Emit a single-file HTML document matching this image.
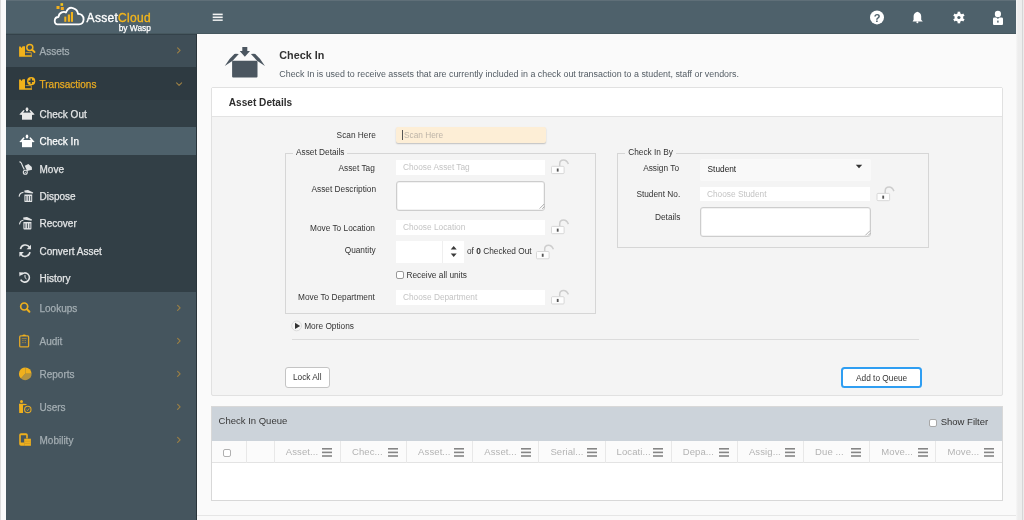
<!DOCTYPE html>
<html><head><meta charset="utf-8">
<style>
*{margin:0;padding:0;box-sizing:border-box}
html,body{width:1024px;height:520px;overflow:hidden;background:#fafafa;font-family:"Liberation Sans",sans-serif}
body{will-change:transform}
.a{position:absolute}
svg{position:absolute;overflow:visible}
#lb{left:0;top:0;width:6px;height:520px;background:#fafafa;border-left:1.5px solid #dcdcdc}
#rb{left:1016px;top:0;width:8px;height:520px;background:linear-gradient(to right,#f7f7f7,#ededed 2px);border-right:2px solid #ececec}
#rb:after{content:"";position:absolute;left:6px;top:0;width:1px;height:520px;background:#d6d6d6}
#hdr{left:6px;top:0;width:1010px;height:34px;background:#4e616b;border-top:1px solid #5f6f78;border-bottom:1px solid #46585f}
#side{left:6px;top:34px;width:190px;height:486px;background:#45555e}
.row{position:absolute;left:0;width:190px}
.lbl{position:absolute;left:33.5px;font-size:10px;white-space:nowrap;line-height:12px;-webkit-text-stroke:0.25px currentColor}
#main{left:196px;top:34px;width:820px;height:486px;background:#fafafa;border-left:1px solid #2a353b}
.t{position:absolute;white-space:nowrap;line-height:1}
.chev{position:absolute;left:171px;width:5px;height:5px;border-right:1px solid #8c7a52;border-top:1px solid #8c7a52;transform:rotate(45deg)}
.inp{position:absolute;background:#fff;font-size:8.3px;color:#c4c4c4;padding-left:7px;white-space:nowrap}
.ta{position:absolute;background:#fff;border:1px solid #cdcdcd;border-radius:3px;box-shadow:inset 0 0 0 0.5px #e6e6e6}
.fl{position:absolute;font-size:8.3px;color:#333;white-space:nowrap;line-height:1}
.fs{position:absolute;border:1px solid #d6d6d6}
.lg{position:absolute;font-size:8.3px;color:#333;background:#f4f4f4;padding:0 3px;white-space:nowrap;line-height:10px}
.col{position:absolute;top:441px;height:22px;border-left:1px solid #e8e8e8;font-size:9.5px;color:#b3b3b3;line-height:22px;white-space:nowrap;width:66.16px;padding-left:11px;letter-spacing:0.1px}
.col i{position:absolute;right:7.8px;top:7px;width:10px;height:8.8px;border-top:1.6px solid #858585;border-bottom:1.6px solid #858585}
.col i:after{content:"";position:absolute;left:0;top:2px;width:10px;height:1.6px;background:#858585}
.btn{position:absolute;background:#fff;border:1px solid #bdbdbd;border-radius:3px;font-size:8.3px;color:#333;text-align:center}
</style></head><body>
<div class="a" id="lb"></div>
<div class="a" id="rb"></div>
<div class="a" id="hdr"></div>

<!-- logo -->
<svg style="left:0;top:0" width="200" height="34">
  <rect x="56.5" y="6" width="3" height="3" fill="#f2b01e"/>
  <rect x="60.5" y="3.2" width="2.6" height="2.6" fill="#f5c518"/>
  <rect x="60.8" y="7" width="3" height="3" fill="#f2a91e"/>
  <path d="M57.5 24.3 C53.5 24.3 53.8 17 58.5 17 C59 12.5 63.8 10.8 66 12.5 C67.5 8.8 70 7.6 71.8 7.8 L73.5 8.3 C76 9 77.8 11.5 78 14 C81 13.6 83.8 15.8 83.6 19.5 C83.4 22.5 81.5 24.3 79 24.3 Z" fill="none" stroke="#fff" stroke-width="1.8" stroke-linejoin="round"/>
  <rect x="64.3" y="16.6" width="2" height="5.2" fill="#f0b21c"/>
  <rect x="67.8" y="14.5" width="2.2" height="7.3" fill="#f0b21c"/>
  <rect x="70.9" y="12" width="2.1" height="9.8" fill="#f0b21c"/>
  <text x="86.6" y="22" font-family="Liberation Sans" font-size="12" fill="#fff" stroke="#fff" stroke-width="0.35" letter-spacing="0.3">Asset<tspan fill="#f2b51c" stroke="#f2b51c">Cloud</tspan></text>
  <text x="118.7" y="30.6" font-family="Liberation Sans" font-size="8.4" fill="#fff" stroke="#fff" stroke-width="0.25">by Wasp</text>
  <rect x="212.7" y="13.6" width="10" height="1.6" fill="#f4f4f4"/>
  <rect x="212.7" y="16.5" width="10" height="1.6" fill="#f4f4f4"/>
  <rect x="212.7" y="19.4" width="10" height="1.6" fill="#e2e5e6"/>
</svg>

<!-- header icons -->
<svg style="left:860px;top:0" width="160" height="34">
  <circle cx="17" cy="17.4" r="7" fill="#fff"/>
  <text x="17" y="21.5" font-family="Liberation Sans" font-size="11" font-weight="bold" fill="#4e616b" text-anchor="middle">?</text>
  <path d="M52.6 21.4 L62.8 21.4 L61.2 19.8 L61.2 16.2 Q61.2 12.9 57.4 11.8 Q53.6 12.9 53.6 16.2 L53.6 19.8 Z" fill="#fff"/>
  <circle cx="57.4" cy="22.2" r="1" fill="#fff"/>
  <g transform="translate(98.9 17.5)" fill="#fff">
    <circle r="4.3"/>
    <rect x="-1.3" y="-5.8" width="2.6" height="11.6"/>
    <rect x="-1.3" y="-5.8" width="2.6" height="11.6" transform="rotate(60)"/>
    <rect x="-1.3" y="-5.8" width="2.6" height="11.6" transform="rotate(120)"/>
    <circle r="1.6" fill="#4e616b"/>
  </g>
  <ellipse cx="137.9" cy="14" rx="3.1" ry="3.2" fill="#fff"/>
  <path d="M133 18.8 Q133 17.4 134.4 17.4 L136.4 17.4 L137.9 19 L139.4 17.4 L141.6 17.4 Q143 17.4 143 18.8 L143 24 Q143 25 142 25 L134 25 Q133 25 133 24 Z" fill="#fff"/>
  <rect x="137.2" y="20.6" width="1.4" height="2" fill="#4e616b"/>
</svg>

<div class="a" id="side">
  <div class="row" style="top:0;height:33px;background:#3f4e57;border-top:1px solid #34424a"></div>
  <div class="row" style="top:33px;height:33px;background:#2e3a41"></div>
  <div class="row" style="top:66px;height:192px;background:#323f46"></div>
  <div class="row" style="top:93px;height:28px;background:#4e616b"></div>
  
  <svg style="left:0;top:0" width="1" height="1">
    <g fill="none" stroke="#9a7f45" stroke-width="1.15" stroke-linecap="round" stroke-linejoin="round">
      <path d="M171.6 13.8 L174.1 16.3 L171.6 18.8"/>
      <path d="M170.6 48.8 L173.1 51.3 L175.6 48.8"/>
      <path d="M171.6 271.3 L174.1 273.8 L171.6 276.3"/>
      <path d="M171.6 304.3 L174.1 306.8 L171.6 309.3"/>
      <path d="M171.6 337.3 L174.1 339.8 L171.6 342.3"/>
      <path d="M171.6 370.3 L174.1 372.8 L171.6 375.3"/>
      <path d="M171.6 403.3 L174.1 405.8 L171.6 408.3"/>
    </g>
  </svg>
<div class="lbl" style="top:12px;color:#a3adb2">Assets</div>
  <div class="lbl" style="top:45px;color:#e9ab22">Transactions</div>
  <div class="lbl" style="top:75px;color:#e4e6e7">Check Out</div>
  <div class="lbl" style="top:102px;color:#ffffff">Check In</div>
  <div class="lbl" style="top:130px;color:#e4e6e7">Move</div>
  <div class="lbl" style="top:157px;color:#e4e6e7">Dispose</div>
  <div class="lbl" style="top:184px;color:#e4e6e7">Recover</div>
  <div class="lbl" style="top:212px;color:#e4e6e7">Convert Asset</div>
  <div class="lbl" style="top:239px;color:#e4e6e7">History</div>
  <div class="lbl" style="top:269px;color:#a3adb2">Lookups</div>
  <div class="lbl" style="top:302px;color:#a3adb2">Audit</div>
  <div class="lbl" style="top:335px;color:#a3adb2">Reports</div>
  <div class="lbl" style="top:368px;color:#a3adb2">Users</div>
  <div class="lbl" style="top:401px;color:#a3adb2">Mobility</div>
</div>


<!-- sidebar icons -->
<svg style="left:0;top:0" width="1" height="1">
  <g fill="#f2b21b">
    <!-- assets -->
    <path d="M19.1 46.5 L20.6 46.5 L21.6 48 L22.6 46.3 L25 46.3 L25 55.2 L32 55.2 L32 56.8 L19.1 56.8 Z"/>
    <path d="M25.6 52.6 H31.3 V55.6" fill="none" stroke="#c89a30" stroke-width="0.9"/>
    <circle cx="29.8" cy="47.4" r="3" fill="none" stroke="#f2b21b" stroke-width="1.5"/>
    <path d="M32.1 49.7 L34.5 52" stroke="#f2b21b" stroke-width="1.9" stroke-linecap="round"/>
    <!-- transactions -->
    <path d="M19.1 79.5 L20.6 79.5 L21.6 81 L22.6 79.3 L25 79.3 L25 88.2 L32 88.2 L32 89.8 L19.1 89.8 Z"/>
    <path d="M25.6 85.6 H31.3 V88.6" fill="none" stroke="#c89a30" stroke-width="0.9"/>
    <circle cx="31.2" cy="81.2" r="4.1"/>
    <path d="M31.2 78.6 V83.8 M28.6 81.2 H33.8" stroke="#2e3a41" stroke-width="1.5"/>
  </g>
  <g fill="#e8e8e8">
    <!-- check out -->
    <rect x="22" y="112.6" width="10" height="7.1"/>
    <path d="M19.3 114.6 L23.5 109.9 L24.7 110.6 L21.6 114.9 Z M34.7 114.6 L30.5 109.9 L29.3 110.6 L32.4 114.9 Z"/>
    <path d="M27 107 L29 109.6 L28 109.6 L28 111.2 L26 111.2 L26 109.6 L25 109.6 Z"/>
  </g>
  <g fill="#ffffff">
    <!-- check in -->
    <rect x="22" y="140" width="10" height="7.2"/>
    <path d="M19.3 142 L23.5 137.3 L24.7 138 L21.6 142.3 Z M34.7 142 L30.5 137.3 L29.3 138 L32.4 142.3 Z"/>
    <ellipse cx="27" cy="136.6" rx="1.3" ry="2"/>
  </g>
  <g fill="#e2e4e5">
    <!-- move -->
    <path d="M19.4 161.8 Q21.5 162 22.3 165.5 L24.3 169.5" fill="none" stroke="#e2e4e5" stroke-width="1.1"/>
    <path d="M24.8 165.8 L28.4 164 L31.8 167 L32 169.7 L27 171 Z"/>
    <circle cx="25.3" cy="172.3" r="2" fill="none" stroke="#e2e4e5" stroke-width="1.1"/>
    <circle cx="25.3" cy="172.3" r="0.6"/>
    <!-- dispose -->
    <path d="M24.4 194.6 H32.2 V201.2 Q32.2 202.1 31.3 202.1 H25.3 Q24.4 202.1 24.4 201.2 Z"/>
    <path d="M25.9 196 V200.8 M28.3 196 V200.8 M30.7 196 V200.8" stroke="#33414a" stroke-width="0.9"/>
    <path d="M24.3 190.4 L28 189.9 L33.2 192.4 L32.8 193.6 L24.5 192.5 Z"/>
    <path d="M19.1 196.6 Q19.6 192.7 23.5 192.4" fill="none" stroke="#e2e4e5" stroke-width="1.1"/>
    <!-- recover -->
    <path d="M23.4 222 H31.4 V228.6 Q31.4 229.5 30.5 229.5 H24.3 Q23.4 229.5 23.4 228.6 Z"/>
    <path d="M24.9 223.4 V228.2 M27.4 223.4 V228.2 M29.9 223.4 V228.2" stroke="#33414a" stroke-width="0.9"/>
    <path d="M23.2 217.4 L27 217 L32 219.6 L31.6 220.8 L23.4 219.6 Z"/>
    <path d="M19.5 224.4 Q20 220.5 23.4 220.2" fill="none" stroke="#e2e4e5" stroke-width="1.1"/>
    <!-- convert -->
    <path d="M20.5 249.2 A5 5 0 0 1 29.6 247.2" fill="none" stroke="#e2e4e5" stroke-width="1.6"/>
    <path d="M31 244.7 L31 249.3 L26.6 249.3 Z"/>
    <path d="M30 252.2 A5 5 0 0 1 20.9 254.2" fill="none" stroke="#e2e4e5" stroke-width="1.6"/>
    <path d="M19.4 256.7 L19.4 252.1 L23.8 252.1 Z"/>
    <!-- history -->
    <path d="M21.1 274.8 A4.6 4.6 0 1 1 20.7 279.6" fill="none" stroke="#e2e4e5" stroke-width="1.6"/>
    <path d="M19.2 272.3 L23.6 272.6 L19.5 276.6 Z"/>
    <path d="M25 274.9 V277.6 L26.6 279" fill="none" stroke="#e2e4e5" stroke-width="1"/>
  </g>
  <g fill="#efb01d">
    <!-- lookups -->
    <circle cx="24.2" cy="306.5" r="3.5" fill="none" stroke="#efb01d" stroke-width="1.7"/>
    <path d="M26.9 309.2 L29.4 311.7" stroke="#efb01d" stroke-width="2" stroke-linecap="round"/>
    <!-- audit -->
    <rect x="19.7" y="335.9" width="8.9" height="11" rx="1" fill="none" stroke="#e3a927" stroke-width="1.3"/>
    <path d="M22.3 336 Q22.3 334.6 24.15 334.6 Q26 334.6 26 336 Z"/>
    <path d="M21.8 338.6 H26.6 M22.2 340.6 H23.6 M24.6 340.6 H26 M22.2 342.6 H23.6 M24.6 342.6 H26" stroke="#c9962a" stroke-width="0.7"/>
    <!-- reports -->
    <path d="M25.3 373.8 V367.5 A6.3 6.3 0 0 1 31.6 373.8 Z"/>
    <path d="M25.3 373.8 V367.5 A6.3 6.3 0 0 0 21 378.4 Z"/>
    <path d="M25.3 373.8 L31.6 373.8 A6.3 6.3 0 0 1 21 378.4 Z" fill="#c9a03a" opacity="0.85"/>
    <!-- users -->
    <circle cx="21.5" cy="401.6" r="1.5"/>
    <path d="M19 403.8 H23 L26.5 404 V405 L23 405.2 V413 H19.2 Z"/>
    <circle cx="27.8" cy="409.4" r="3.2" fill="none" stroke="#e3a927" stroke-width="1.1"/>
    <path d="M26.6 409.8 L27.6 410.6 L29.2 408.4" fill="none" stroke="#e3a927" stroke-width="0.8"/>
    <!-- mobility -->
    <path d="M21 433.2 H26 Q27.8 433.2 27.8 435 V438.6 H24.2 V445.8 H21 Q19.2 445.8 19.2 444 V435 Q19.2 433.2 21 433.2 Z M20.8 435.2 V442.6 H24.2 V438.6 H26.2 V435.2 Z" fill-rule="evenodd"/>
    <path d="M24.2 438.7 H30.9 V445.8 H24.2 Z"/>
    <path d="M24.8 441.2 H30.3 M24.8 443.4 H30.3" stroke="#b88a2e" stroke-width="0.5"/>
  </g>
</svg>

<div class="a" id="main"></div>

<!-- title area -->
<svg style="left:0;top:0" width="300" height="90">
  <rect x="232.1" y="60.7" width="25.4" height="16.9" rx="1" fill="#4b5660"/>
  <path d="M242.3 46.9 H247.3 V50.9 H250 L244.85 56.8 L239.7 50.9 H242.3 Z" fill="#4b5660"/>
  <path d="M224.75 66 Q228.7 58.7 234.4 53.9 Q236.5 53.7 238.8 54.1 L232.6 60.7 Z" fill="#4b5660"/>
  <path d="M264.95 66 Q261 58.7 255.3 53.9 Q253.2 53.7 250.9 54.1 L257.1 60.7 Z" fill="#4b5660"/>
</svg>
<div class="t" style="left:279.3px;top:49.8px;font-size:10.8px;font-weight:bold;color:#333">Check In</div>
<div class="t" style="left:279.3px;top:70px;font-size:8.88px;color:#535c64">Check In is used to receive assets that are currently included in a check out transaction to a student, staff or vendors.</div>

<!-- panel -->
<div class="a" style="left:211px;top:87px;width:792px;height:309px;border:1px solid #e1e1e1;border-radius:2px;background:#f4f4f4">
  <div class="a" style="left:0;top:0;width:790px;height:29px;background:#fff;border-bottom:1px solid #e3e3e3"></div>
</div>
<div class="t" style="left:228.8px;top:97.7px;font-size:10.1px;font-weight:bold;color:#2e2e2e">Asset Details</div>

<!-- scan -->
<div class="fl" style="left:336.6px;top:131px">Scan Here</div>
<div class="a" style="left:396px;top:127.2px;width:150px;height:15.4px;background:#fdeed6;border-radius:2px;box-shadow:0 1px 1.5px rgba(0,0,0,.22)"></div>
<div class="t" style="left:404px;top:130.6px;font-size:8.3px;color:#bdb4a8">Scan Here</div>
<div class="a" style="left:402px;top:129.5px;width:1px;height:10px;background:#555"></div>

<!-- fieldset 1 -->
<div class="fs" style="left:285.3px;top:153px;width:310.5px;height:160.5px"></div>
<div class="lg" style="left:293px;top:146.5px">Asset Details</div>
<div class="fl" style="left:338.5px;top:163.5px">Asset Tag</div>
<div class="inp" style="left:396px;top:159.7px;width:149px;height:15px;line-height:15px">Choose Asset Tag</div>
<div class="fl" style="left:311.5px;top:185.3px">Asset Description</div>
<div class="ta" style="left:396px;top:180.5px;width:149.2px;height:30px"></div>
<div class="fl" style="left:310px;top:223.8px">Move To Location</div>
<div class="inp" style="left:396px;top:219.8px;width:149px;height:15px;line-height:15px">Choose Location</div>
<div class="fl" style="left:344.7px;top:245.7px">Quantity</div>
<div class="a" style="left:396px;top:240.6px;width:68px;height:22.2px;background:#fff"></div>
<div class="a" style="left:442px;top:241px;width:1px;height:21.8px;background:#efefef"></div>
<svg style="left:0;top:0" width="1" height="1">
  <path d="M450.7 249.6 L453.7 246.1 L456.7 249.6 Z M450.7 253.4 L453.7 256.9 L456.7 253.4 Z" fill="#3a3a3a"/>
</svg>
<div class="fl" style="left:467px;top:247.4px">of <b>0</b> Checked Out</div>
<div class="a" style="left:396px;top:271.3px;width:7.8px;height:7.8px;border:1px solid #9a9a9a;border-radius:2px;background:#fff"></div>
<div class="fl" style="left:406.5px;top:271px">Receive all units</div>
<div class="fl" style="left:298px;top:293.3px">Move To Department</div>
<div class="inp" style="left:396px;top:290.2px;width:149px;height:15px;line-height:15px">Choose Department</div>

<!-- fieldset 2 -->
<div class="fs" style="left:617px;top:153px;width:311.5px;height:95px"></div>
<div class="lg" style="left:624.7px;top:146.5px;padding:0 3.5px">Check In By</div>
<div class="fl" style="left:643.2px;top:163.6px">Assign To</div>
<div class="a" style="left:700.2px;top:158.7px;width:170.8px;height:22.3px;background:#f9f9f9;border-radius:2px;font-size:8.3px;color:#222;padding-left:7.4px;line-height:21px">Student</div>
<svg style="left:0;top:0" width="1" height="1"><path d="M855.8 164.8 H862.2 L859 168.2 Z" fill="#333"/></svg>
<div class="fl" style="left:636.4px;top:190.3px">Student No.</div>
<div class="inp" style="left:700px;top:186.7px;width:170.4px;height:14.5px;line-height:14.5px">Choose Student</div>
<div class="fl" style="left:655px;top:213px">Details</div>
<div class="ta" style="left:700px;top:207px;width:171px;height:29.7px"></div>

<svg style="left:0;top:0" width="1" height="1">
  <path d="M539.6 208.6 L544.2 204 M542.2 208.8 L544.4 206.6" stroke="#9a9a9a" stroke-width="0.8"/>
  <path d="M865.4 235.3 L870 230.7 M868 235.5 L870.2 233.3" stroke="#9a9a9a" stroke-width="0.8"/>
</svg>
<!-- locks -->
<svg style="left:0;top:0" width="1" height="1">
  <defs>
    <g id="lk">
      <path d="M8.7 6.8 V4.5 C8.7 2.2 10.3 0.6 12.6 0.6 C14.6 0.6 16.3 2 17.4 4.6" fill="none" stroke="#cdcdcd" stroke-width="1.5"/>
      <rect x="0.5" y="6.9" width="12.6" height="7.3" rx="1" fill="#fdfdfd" stroke="#d4d4d4" stroke-width="0.9"/>
      <rect x="5.8" y="9.1" width="1.8" height="3.1" fill="#555"/>
    </g>
  </defs>
  <use href="#lk" x="551" y="159.4"/>
  <use href="#lk" x="551" y="219.5"/>
  <use href="#lk" x="536" y="244.6"/>
  <use href="#lk" x="551" y="289.8"/>
  <use href="#lk" x="876.5" y="186.5"/>
</svg>

<!-- more options -->
<svg style="left:0;top:0" width="1" height="1">
  <circle cx="296.6" cy="325.9" r="4.9" fill="#f6f6f6" stroke="#d0d0d0" stroke-width="0.7"/>
  <path d="M295 322.8 L300.2 325.9 L295 329 Z" fill="#333"/>
</svg>
<div class="fl" style="left:304.2px;top:321.5px">More Options</div>
<div class="a" style="left:291.5px;top:338.5px;width:627.2px;height:1px;background:#dcdcdc"></div>

<div class="btn" style="left:285px;top:367.2px;width:44.5px;height:20.6px;line-height:18.6px;border-color:#c4c4c4">Lock All</div>
<div class="btn" style="left:841.4px;top:366.8px;width:80.5px;height:20.8px;line-height:18px;border:2px solid #2f9ef2;border-radius:3.5px">Add to Queue</div>

<!-- queue -->
<div class="a" style="left:211px;top:405.8px;width:792px;height:95px;border:1px solid #d8d8d8;background:#fff">
  <div class="a" style="left:0;top:0;width:790px;height:35px;background:#ccd3da"></div>
</div>
<div class="t" style="left:218.6px;top:415.5px;font-size:9.5px;color:#383838">Check In Queue</div>
<div class="a" style="left:929.2px;top:418.9px;width:8px;height:8px;border:1px solid #a8a8a8;border-radius:2px;background:#fff"></div>
<div class="t" style="left:940.7px;top:417.3px;font-size:9.5px;color:#333">Show Filter</div>
<div class="a" style="left:212px;top:441px;width:790px;height:22px;border-bottom:1px solid #e3e3e3;background:#fbfbfb"></div>
<div class="a" style="left:222.8px;top:449.4px;width:8px;height:8px;border:1px solid #b0b0b0;border-radius:2px;background:#fff"></div>
<div class="a" style="left:245.8px;top:441px;width:1px;height:22px;background:#e8e8e8"></div>

<div class="col" style="left:273.80px">Asset...<svg style="right:7.8px;top:0" width="10" height="22"><rect y="7" width="10" height="1.6" fill="#868686"/><rect y="10.6" width="10" height="1.6" fill="#868686"/><rect y="14.2" width="10" height="1.6" fill="#868686"/></svg></div>
<div class="col" style="left:339.96px">Chec...<svg style="right:7.8px;top:0" width="10" height="22"><rect y="7" width="10" height="1.6" fill="#868686"/><rect y="10.6" width="10" height="1.6" fill="#868686"/><rect y="14.2" width="10" height="1.6" fill="#868686"/></svg></div>
<div class="col" style="left:406.12px">Asset...<svg style="right:7.8px;top:0" width="10" height="22"><rect y="7" width="10" height="1.6" fill="#868686"/><rect y="10.6" width="10" height="1.6" fill="#868686"/><rect y="14.2" width="10" height="1.6" fill="#868686"/></svg></div>
<div class="col" style="left:472.28px">Asset...<svg style="right:7.8px;top:0" width="10" height="22"><rect y="7" width="10" height="1.6" fill="#868686"/><rect y="10.6" width="10" height="1.6" fill="#868686"/><rect y="14.2" width="10" height="1.6" fill="#868686"/></svg></div>
<div class="col" style="left:538.44px">Serial...<svg style="right:7.8px;top:0" width="10" height="22"><rect y="7" width="10" height="1.6" fill="#868686"/><rect y="10.6" width="10" height="1.6" fill="#868686"/><rect y="14.2" width="10" height="1.6" fill="#868686"/></svg></div>
<div class="col" style="left:604.60px">Locati...<svg style="right:7.8px;top:0" width="10" height="22"><rect y="7" width="10" height="1.6" fill="#868686"/><rect y="10.6" width="10" height="1.6" fill="#868686"/><rect y="14.2" width="10" height="1.6" fill="#868686"/></svg></div>
<div class="col" style="left:670.76px">Depa...<svg style="right:7.8px;top:0" width="10" height="22"><rect y="7" width="10" height="1.6" fill="#868686"/><rect y="10.6" width="10" height="1.6" fill="#868686"/><rect y="14.2" width="10" height="1.6" fill="#868686"/></svg></div>
<div class="col" style="left:736.92px">Assig...<svg style="right:7.8px;top:0" width="10" height="22"><rect y="7" width="10" height="1.6" fill="#868686"/><rect y="10.6" width="10" height="1.6" fill="#868686"/><rect y="14.2" width="10" height="1.6" fill="#868686"/></svg></div>
<div class="col" style="left:803.08px">Due ...<svg style="right:7.8px;top:0" width="10" height="22"><rect y="7" width="10" height="1.6" fill="#868686"/><rect y="10.6" width="10" height="1.6" fill="#868686"/><rect y="14.2" width="10" height="1.6" fill="#868686"/></svg></div>
<div class="col" style="left:869.24px">Move...<svg style="right:7.8px;top:0" width="10" height="22"><rect y="7" width="10" height="1.6" fill="#868686"/><rect y="10.6" width="10" height="1.6" fill="#868686"/><rect y="14.2" width="10" height="1.6" fill="#868686"/></svg></div>
<div class="col" style="left:935.40px">Move...<svg style="right:7.8px;top:0" width="10" height="22"><rect y="7" width="10" height="1.6" fill="#868686"/><rect y="10.6" width="10" height="1.6" fill="#868686"/><rect y="14.2" width="10" height="1.6" fill="#868686"/></svg></div>
<div class="a" style="left:197px;top:515px;width:819px;height:1px;background:#e6e6e6"></div>
</body></html>
